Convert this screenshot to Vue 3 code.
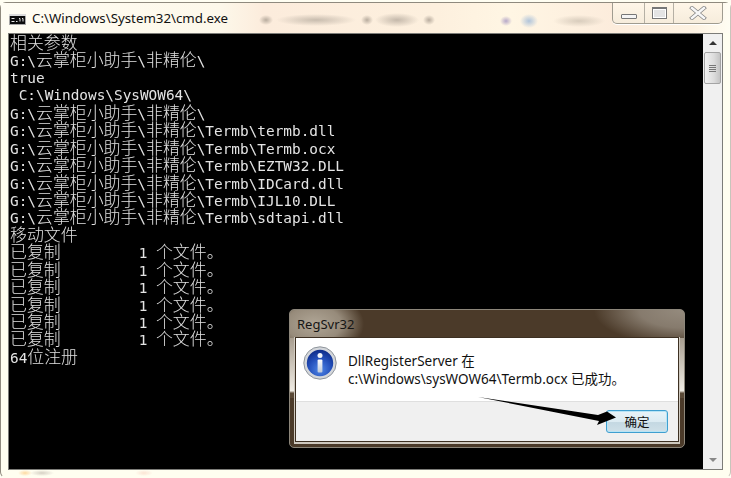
<script setup>
const lines = [
  '相关参数',
  'G:\\云掌柜小助手\\非精伦\\',
  'true',
  ' C:\\Windows\\SysWOW64\\',
  'G:\\云掌柜小助手\\非精伦\\',
  'G:\\云掌柜小助手\\非精伦\\Termb\\termb.dll',
  'G:\\云掌柜小助手\\非精伦\\Termb\\Termb.ocx',
  'G:\\云掌柜小助手\\非精伦\\Termb\\EZTW32.DLL',
  'G:\\云掌柜小助手\\非精伦\\Termb\\IDCard.dll',
  'G:\\云掌柜小助手\\非精伦\\Termb\\IJL10.DLL',
  'G:\\云掌柜小助手\\非精伦\\Termb\\sdtapi.dll',
  '移动文件',
  '已复制         1 个文件。',
  '已复制         1 个文件。',
  '已复制         1 个文件。',
  '已复制         1 个文件。',
  '已复制         1 个文件。',
  '已复制         1 个文件。',
  '64位注册'
]
const runs = (line) =>
  line.match(/[\u3000-\u9fff]+|[^\u3000-\u9fff]+/g).map((text) => ({
    text,
    cjk: /[\u3000-\u9fff]/.test(text)
  }))
</script>

<template>
  <div class="page">
    <div class="window">
      <header class="titlebar">
        <svg class="cmd-icon" viewBox="0 0 17 11" width="17" height="11">
          <rect width="17" height="11" fill="#a8a8a8" />
          <rect x="0" y="0" width="17" height="2" fill="#dcdcdc" />
          <rect x="1" y="2" width="15" height="8" fill="#0c0c0c" />
          <path d="M2.5 4.5h3M2.5 7.5h3M7 7.5h1.5M10 4.5h1v3M13 4.5h1v3" stroke="#e6e6e6" stroke-width="1" fill="none" />
        </svg>
        <span class="title">C:\Windows\System32\cmd.exe</span>
        <div class="caption">
          <div class="cap cap-min"><i class="min-glyph"></i></div>
          <div class="cap cap-max"><i class="max-glyph"></i></div>
          <div class="cap cap-close">
            <svg viewBox="0 0 18 14" width="18" height="14">
              <path d="M3 2l12 10M15 2L3 12" stroke="#858585" stroke-width="4" stroke-linecap="square" fill="none" />
              <path d="M3 2l12 10M15 2L3 12" stroke="#f7f7f7" stroke-width="2.4" stroke-linecap="square" fill="none" />
            </svg>
          </div>
        </div>
      </header>
      <div class="client">
        <main class="console">
          <div v-for="(line, i) in lines" :key="i" class="line">
            <span v-for="(r, j) in runs(line)" :key="j" :class="r.cjk ? 'cjk' : 'lat'">{{ r.text }}</span>
          </div>
        </main>
        <aside class="scrollbar">
          <div class="sb-btn"><i class="tri tri-up"></i></div>
          <div class="sb-thumb"><i></i><i></i><i></i><i></i></div>
          <div class="sb-track"></div>
          <div class="sb-btn"><i class="tri tri-down"></i></div>
        </aside>
      </div>
    </div>

    <section class="dialog">
      <div class="dlg-title">RegSvr32</div>
      <div class="dlg-inner">
        <div class="dlg-body">
          <svg class="info" viewBox="0 0 34 34" width="34" height="34">
            <defs>
              <radialGradient id="blue" cx="50%" cy="75%" r="70%">
                <stop offset="0" stop-color="#4f86e6" />
                <stop offset=".6" stop-color="#2450bb" />
                <stop offset="1" stop-color="#10308f" />
              </radialGradient>
              <linearGradient id="stem" x1="0" y1="0" x2="0" y2="1">
                <stop offset="0" stop-color="#fff" />
                <stop offset="1" stop-color="#bcc8da" />
              </linearGradient>
            </defs>
            <circle cx="17" cy="17" r="16.2" fill="#d4d7db" stroke="#8f959c" stroke-width="1" />
            <circle cx="17" cy="17" r="13.2" fill="url(#blue)" />
            <circle cx="17" cy="9.6" r="2.5" fill="#f2f5fa" />
            <rect x="14.6" y="13.5" width="4.8" height="13" rx="1" fill="url(#stem)" />
          </svg>
          <p class="msg">DllRegisterServer 在<br />c:\Windows\sysWOW64\Termb.ocx 已成功。</p>
        </div>
        <div class="dlg-foot">
          <button class="ok">确定</button>
        </div>
      </div>
    </section>

    <svg class="arrow" viewBox="0 0 731 478" width="731" height="478">
      <path d="M478 397 L598 415 L607 411.5 L616 417.5 L597 425 L599 421 Z" fill="#000" />
    </svg>
  </div>
</template>

<style>
html, body { margin: 0; padding: 0; background: #fffef2; }
</style>

<style scoped>
.page {
  position: relative;
  width: 731px;
  height: 478px;
  overflow: hidden;
  background: #fffef2;
  font-family: "Noto Sans", "Noto Sans CJK SC", sans-serif;
}
.window {
  box-sizing: border-box;
  width: 731px;
  height: 476px;
  margin-top: 2px;
  padding: 0 7px 7px 7px;
  border: 1px solid #8f8a7e;
  border-right-color: #c8c5bb;
  border-bottom-color: transparent;
  border-radius: 6px;
  background:
    radial-gradient(ellipse 7px 3px at 24px 470px, #fdd9a0, rgba(253,217,160,0)),
    radial-gradient(ellipse 12px 3px at 41px 470px, #d6d0c4, rgba(214,208,196,0)),
    radial-gradient(ellipse 9px 3px at 143px 470px, #fbe4d4, rgba(251,228,212,0)),
    #fffef0;
  display: flex;
  flex-direction: column;
}
.titlebar {
  height: 30px;
  flex: none;
  margin: 0 -7px;
  padding: 0 7px;
  display: flex;
  align-items: flex-start;
  background:
    radial-gradient(ellipse 7px 5px at 265px 17px, #b8ac9e, rgba(184,172,158,0)),
    radial-gradient(ellipse 40px 6px at 315px 17px, #c8bcae, rgba(200,188,174,0)),
    radial-gradient(ellipse 6px 5px at 366px 17px, #b8ac9e, rgba(184,172,158,0)),
    radial-gradient(ellipse 22px 7px at 396px 17px, #c4b8aa, rgba(196,184,170,0)),
    radial-gradient(ellipse 6px 5px at 428px 17px, #b8ac9e, rgba(184,172,158,0)),
    radial-gradient(ellipse 6px 5px at 505px 18px, #b6a8c8, rgba(182,168,200,0)),
    radial-gradient(ellipse 9px 7px at 528px 18px, #b0c4da, rgba(176,196,218,0)),
    radial-gradient(ellipse 26px 6px at 578px 18px, #d8ccbc, rgba(216,204,188,0)),
    linear-gradient(90deg, #fffdf3 0%, #fdf8ea 30%, #fcecdc 36%, #fdf0de 60%, #fff6e4 70%, #fcecdc 84%, #fdf2e2 95%, #fffdf3 100%);
}
.cmd-icon { margin: 11px 6px 0 1px; flex: none; }
.title {
  margin-top: 6px;
  font-size: 13.3px;
  line-height: 19px;
  color: #111;
}
.caption {
  margin: 0 0 0 auto;
  width: 111px;
  height: 21px;
  display: flex;
  box-sizing: border-box;
  border: 1px solid #a09c90;
  border-top: 0;
  border-radius: 0 0 5px 5px;
  background: linear-gradient(#fff6e8, #f6ecdc);
  box-shadow: 0 1px 0 #fff;
}
.cap { display: flex; align-items: center; justify-content: center; border-left: 1px solid #b5b0a4; }
.cap:first-child { border-left: 0; }
.cap-min { width: 31px; }
.cap-max { width: 28px; }
.cap-close { flex: 1; }
.min-glyph {
  width: 14px; height: 3px; margin-top: 7px;
  border: 1px solid #777; background: #f4f4f4; border-radius: 1px;
}
.max-glyph {
  box-sizing: border-box;
  width: 15px; height: 12px;
  border: 1px solid #777; border-top-width: 2px; background: #e4e4e4;
  box-shadow: inset 0 0 0 1px #fff;
}
.client {
  flex: 1;
  min-height: 0;
  display: flex;
  border: 1px solid #7c7c78;
}
.console {
  flex: 1;
  background: #000;
  padding-left: 1px;
}
.line {
  height: 17.45px;
  line-height: 16px;
  white-space: pre;
  filter: blur(.3px);
}
.lat {
  font-family: "DejaVu Sans Mono", monospace;
  font-size: 14.4px;
  color: #e4e4e4;
}
.cjk {
  font-family: "Noto Sans CJK SC", sans-serif;
  font-size: 16.9px;
  font-weight: 300;
  color: #e0e0e0;
}
.scrollbar {
  width: 19px;
  flex: none;
  display: flex;
  flex-direction: column;
  background: #f0f0f0;
}
.sb-btn { height: 18px; display: flex; align-items: center; justify-content: center; flex: none; }
.tri { width: 0; height: 0; border-left: 4px solid transparent; border-right: 4px solid transparent; }
.tri-up { border-bottom: 4px solid #333; }
.tri-down { border-top: 4px solid #888; }
.sb-thumb {
  height: 32px;
  flex: none;
  box-sizing: border-box;
  margin: 0 1px;
  border: 1px solid #a4a4a4;
  border-radius: 2px;
  background: linear-gradient(90deg, #f2f2f2, #dcdcdc 60%, #c4c4c4);
  display: flex;
  flex-direction: column;
  justify-content: center;
  align-items: center;
  gap: 1px;
}
.sb-thumb i { width: 7px; height: 1px; background: #777; }
.sb-track { flex: 1; }
.dialog {
  position: absolute;
  left: 289px;
  top: 309px;
  width: 396px;
  height: 139px;
  box-sizing: border-box;
  padding: 0 5px 5px;
  border: 1px solid #8c867a;
  border-radius: 5px;
  background:
    linear-gradient(#a89e90, #f0ece4 88%, #5a4936 92%) 0 28px / 5px 60px no-repeat,
    linear-gradient(#a89e90, #f0ece4 88%, #5a4936 92%) 100% 28px / 5px 60px no-repeat,
    radial-gradient(ellipse 50px 32px at 24px 14px, #b0a696 0%, rgba(176,166,150,.75) 55%, rgba(176,166,150,0) 100%),
    radial-gradient(ellipse 90px 36px at 100% 0, #958b7e 0%, rgba(149,139,126,.8) 50%, rgba(149,139,126,0) 100%),
    #4b3a29;
  display: flex;
  flex-direction: column;
}
.dlg-title {
  height: 27px;
  flex: none;
  font-size: 13px;
  line-height: 29px;
  padding-left: 2px;
  color: #151515;
}
.dlg-inner {
  flex: 1;
  min-height: 0;
  display: flex;
  flex-direction: column;
  background: #fff;
  border: 1px solid #3d3022;
  box-shadow: 0 1px 0 1px #cfc9bf;
}
.dlg-body {
  height: 63px;
  flex: none;
  display: flex;
  align-items: flex-start;
  padding: 8px 0 0 7px;
  box-sizing: border-box;
}
.msg {
  margin: 7px 0 0 11px;
  font-size: 13.5px;
  line-height: 17.5px;
  color: #111;
}
.dlg-foot {
  flex: 1;
  background: #f0f0f0;
  border-top: 1px solid #dfdfdf;
  display: flex;
  justify-content: flex-end;
  align-items: flex-start;
  padding: 8px 10px 0 0;
}
.ok {
  width: 62px;
  height: 23px;
  box-sizing: border-box;
  padding: 0;
  border: 1px solid #3f9fd0;
  border-radius: 3px;
  background: linear-gradient(#e8f3f8 0%, #dcebf2 50%, #c4d8e2 55%, #cfe0e8 100%);
  box-shadow: inset 0 0 0 1px #b8e4f5;
  font-family: "Noto Sans CJK SC", sans-serif;
  font-size: 12.5px;
  line-height: 20px;
  color: #111;
}
.arrow { position: absolute; left: 0; top: 0; pointer-events: none; }
</style>
